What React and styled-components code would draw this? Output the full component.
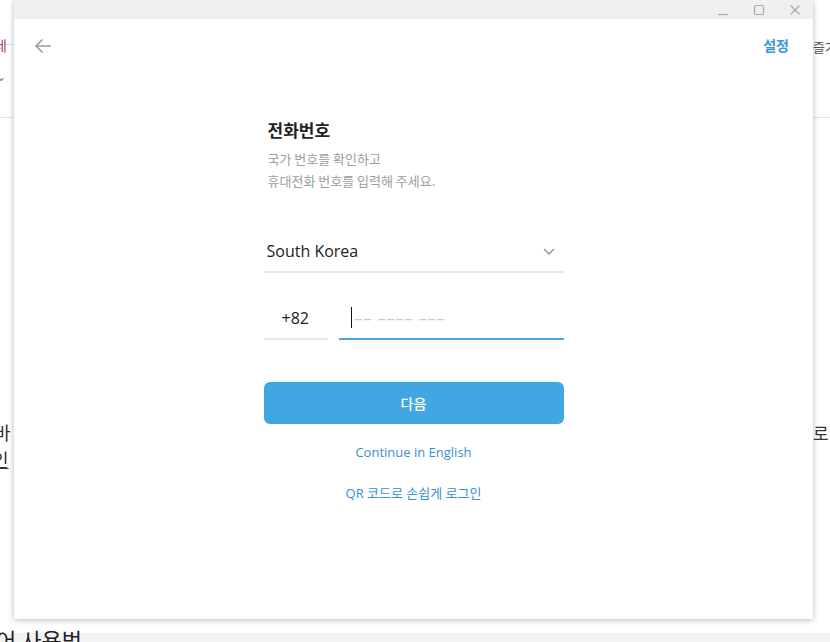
import React from "react";
import styled, { createGlobalStyle } from "styled-components";

const GlobalStyle = createGlobalStyle`
  html, body {
    margin: 0;
    padding: 0;
    background: #ffffff;
    overflow: hidden;
  }
  body {
    font-family: "Open Sans", "Noto Sans CJK KR", sans-serif;
  }
  * { box-sizing: border-box; }
`;

const Desktop = styled.div`
  position: relative;
  width: 830px;
  height: 642px;
  background: #ffffff;
  overflow: hidden;
`;

// the browser page that sits behind the app window
const Backdrop = styled.div`
  position: absolute;
  inset: 0;
  display: flex;
  flex-direction: column;
  .rule {
    height: 1px;
    background: #e4e4e4;
  }
  .bottom {
    margin-top: auto;
    height: 9px;
    background: #f3f3f3;
  }
`;

const Fragment = styled.span`
  position: absolute;
  left: ${(p) => p.x}px;
  top: ${(p) => p.y}px;
  font-family: "Noto Sans CJK KR", sans-serif;
  font-size: ${(p) => p.size || 16}px;
  color: ${(p) => p.color || "#333"};
  line-height: 1;
  white-space: nowrap;
  text-decoration: ${(p) => (p.underline ? "underline" : "none")};
`;

const Window = styled.div`
  position: absolute;
  left: 14px;
  top: 0;
  width: 799px;
  height: 619px;
  background: #ffffff;
  box-shadow: 0 1px 6px rgba(0, 0, 0, 0.28);
  display: flex;
  flex-direction: column;
`;

const TitleBar = styled.div`
  height: 19px;
  background: #f0f0f0;
  display: flex;
  justify-content: flex-end;
  align-items: center;
`;

const WinButton = styled.button`
  width: 36px;
  height: 19px;
  border: none;
  background: transparent;
  padding: 0;
  display: flex;
  align-items: center;
  justify-content: center;
  svg {
    display: block;
  }
`;

const TopBar = styled.div`
  height: 54px;
  display: flex;
  align-items: center;
  justify-content: space-between;
  padding: 0 24px 0 19px;
`;

const BackButton = styled.button`
  border: none;
  background: transparent;
  padding: 0;
  width: 20px;
  height: 20px;
  display: flex;
  align-items: center;
  justify-content: center;
`;

const SettingsLink = styled.a`
  font-family: "Noto Sans CJK KR", sans-serif;
  font-size: 14px;
  font-weight: 700;
  color: #3a96d6;
  text-decoration: none;
  margin-top: -2px;
`;

const Form = styled.div`
  width: 300px;
  margin: 0 auto;
  padding-top: 45px;
  display: flex;
  flex-direction: column;
`;

const Title = styled.h1`
  margin: 0;
  font-family: "Noto Sans CJK KR", sans-serif;
  font-size: 17px;
  font-weight: 700;
  color: #222;
  line-height: 24px;
  padding-left: 4px;
`;

const Subtitle = styled.p`
  margin: 6px 0 0;
  font-family: "Noto Sans CJK KR", sans-serif;
  font-size: 13px;
  color: #9d9d9d;
  line-height: 22px;
  padding-left: 4px;
`;

const CountrySelect = styled.div`
  margin-top: 39px;
  height: 42px;
  border-bottom: 2px solid #e8e8e8;
  display: flex;
  align-items: center;
  justify-content: space-between;
  padding: 0 9px 0 3px;
  font-size: 16px;
  color: #222;
`;

const PhoneRow = styled.div`
  margin-top: 24px;
  display: flex;
  gap: 11px;
`;

const Field = styled.div`
  height: 43px;
  width: ${(p) => p.w}px;
  border-bottom: 2px solid ${(p) => (p.active ? "#4ea5e0" : "#e8e8e8")};
  display: flex;
  align-items: center;
  padding: 0 0 0 ${(p) => p.pad || 0}px;
  font-size: 16px;
  color: #222;
`;

const Caret = styled.span`
  width: 1px;
  height: 21px;
  background: #111;
  margin-right: 3px;
`;

const Placeholder = styled.span`
  color: #c8c8c8;
  font-size: 16px;
  letter-spacing: 1px;
  white-space: pre;
`;

const NextButton = styled.button`
  margin-top: 42px;
  height: 42px;
  width: 300px;
  border: none;
  border-radius: 6px;
  background: #40a7e3;
  color: #fff;
  font-family: "Noto Sans CJK KR", sans-serif;
  font-size: 14px;
  font-weight: 500;
`;

const TextLink = styled.a`
  align-self: center;
  margin-top: ${(p) => p.mt}px;
  font-family: "Open Sans", "Noto Sans CJK KR", sans-serif;
  font-size: 13px;
  color: #3a8fd0;
  text-decoration: none;
  line-height: 18px;
`;

const Chevron = () => (
  <svg width="12" height="7" viewBox="0 0 12 7" fill="none">
    <path d="M1 1l5 5 5-5" stroke="#8f8f8f" strokeWidth="1.3" />
  </svg>
);

export default function App() {
  return (
    <>
      <GlobalStyle />
      <Desktop>
        <Backdrop>
          <div style={{ height: 44 }} />
          <div className="rule" />
          <div style={{ height: 72 }} />
          <div className="rule" />
          <div className="bottom" />
        </Backdrop>
        <Fragment x={-6} y={38} size={14} color="#a03a7a">네</Fragment>
        <Fragment x={813} y={40} size={13} color="#555">즐겨</Fragment>
        <Fragment x={-4} y={70} size={12} color="#777">⌄</Fragment>
        <Fragment x={-6} y={423} size={18} color="#333">바</Fragment>
        <Fragment x={-8} y={450} size={18} color="#333" underline>인</Fragment>
        <Fragment x={813} y={424} size={17} color="#333">로</Fragment>
        <Fragment x={-4} y={628} size={22} color="#222">어 사용법</Fragment>

        <Window>
          <TitleBar>
            <WinButton aria-label="minimize">
              <svg width="12" height="12" viewBox="0 0 12 12">
                <path d="M1 10.5h10" stroke="#aaa" strokeWidth="1.2" />
              </svg>
            </WinButton>
            <WinButton aria-label="maximize">
              <svg width="12" height="12" viewBox="0 0 12 12" fill="none">
                <rect x="1.5" y="1.5" width="9" height="9" rx="1.5" stroke="#aaa" strokeWidth="1.2" />
              </svg>
            </WinButton>
            <WinButton aria-label="close">
              <svg width="12" height="12" viewBox="0 0 12 12">
                <path d="M1.5 1.5l9 9M10.5 1.5l-9 9" stroke="#aaa" strokeWidth="1.2" />
              </svg>
            </WinButton>
          </TitleBar>

          <TopBar>
            <BackButton aria-label="back">
              <svg width="18" height="16" viewBox="0 0 18 16" fill="none">
                <path d="M17 8H2M8.5 1.5L2 8l6.5 6.5" stroke="#9a9a9a" strokeWidth="1.6" />
              </svg>
            </BackButton>
            <SettingsLink>설정</SettingsLink>
          </TopBar>

          <Form>
            <Title>전화번호</Title>
            <Subtitle>
              국가 번호를 확인하고
              <br />
              휴대전화 번호를 입력해 주세요.
            </Subtitle>

            <CountrySelect>
              <span>South Korea</span>
              <Chevron />
            </CountrySelect>

            <PhoneRow>
              <Field w={64} pad={18}>+82</Field>
              <Field w={225} pad={12} active>
                <Caret />
                <Placeholder>{"–– –––– –––"}</Placeholder>
              </Field>
            </PhoneRow>

            <NextButton>다음</NextButton>
            <TextLink mt={19}>Continue in English</TextLink>
            <TextLink mt={23}>QR 코드로 손쉽게 로그인</TextLink>
          </Form>
        </Window>
      </Desktop>
    </>
  );
}
